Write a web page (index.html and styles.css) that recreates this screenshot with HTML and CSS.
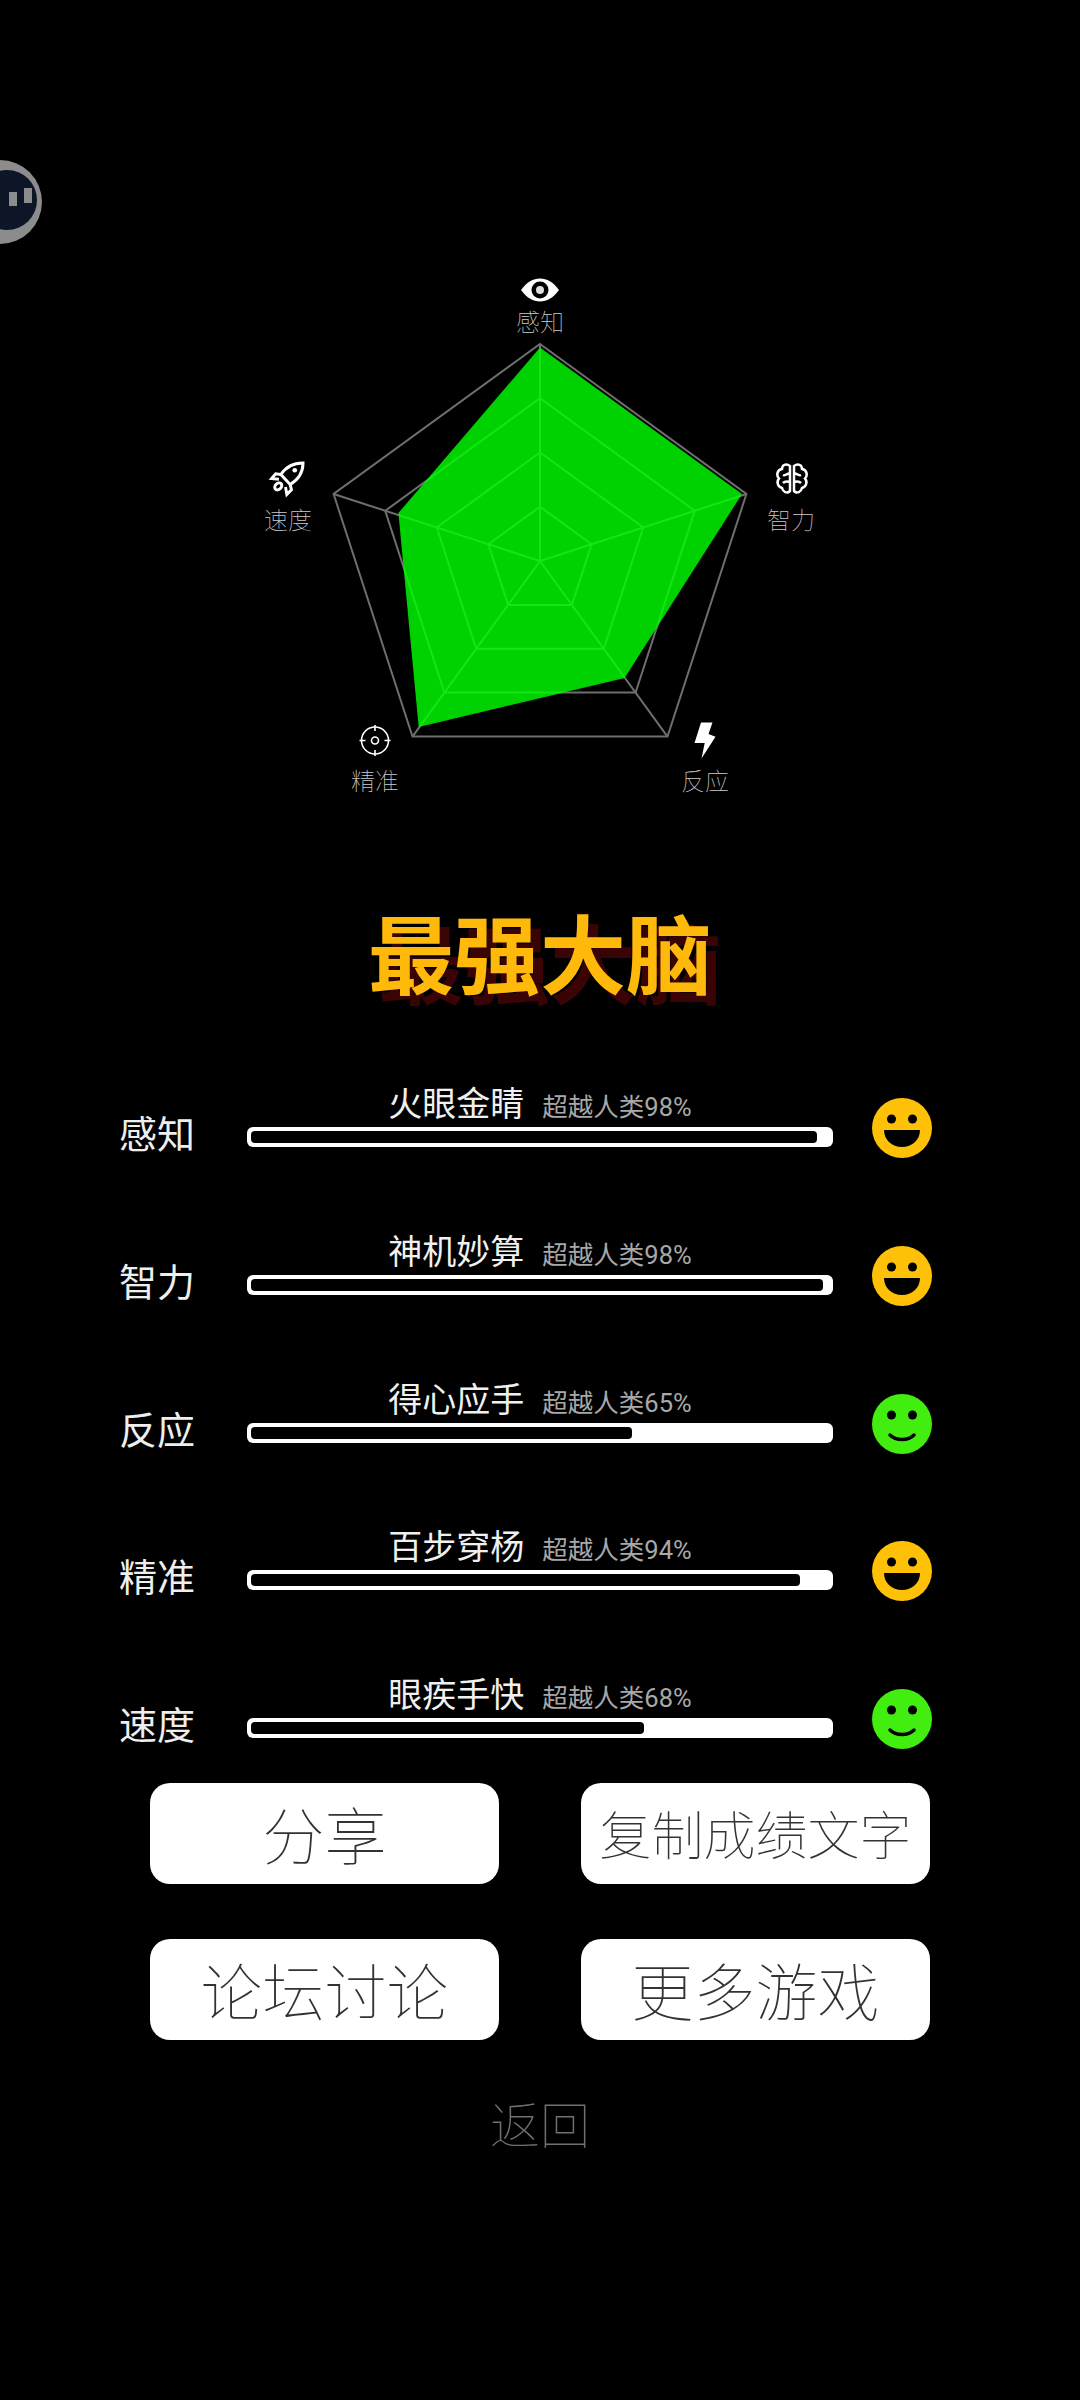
FILE: index.html
```html
<!DOCTYPE html>
<html lang="zh-CN">
<head>
    <meta charset="UTF-8">
    <meta name="viewport" content="width=device-width, initial-scale=1.0">
    <title>最强大脑</title>
    <link rel="stylesheet" href="styles.css">
</head>
<body>
    <div class="page">
        <!-- floating assistant ball, stuck to the left edge -->
        <svg class="float-ball" width="44" height="90" viewBox="0 0 44 90">
            <circle cx="0" cy="45" r="42" fill="#8c8c8c"/>
            <circle cx="7" cy="43" r="30" fill="#0c1626"/>
            <rect x="9" y="35" width="8" height="14" fill="#8c8c8c"/>
            <rect x="24" y="31" width="8" height="15" fill="#8c8c8c"/>
        </svg>

        <svg class="radar" width="1080" height="901" viewBox="0 0 1080 901">
            <g class="grid">
                <polygon points="540,344 746.4,494 667.5,736.6 412.5,736.6 333.6,494"/>
                <polygon points="540,398.3 694.8,510.8 635.6,692.6 444.4,692.6 385.2,510.8"/>
                <polygon points="540,452.5 643.2,527.5 603.8,648.8 476.2,648.8 436.8,527.5"/>
                <polygon points="540,506.8 591.6,544.2 571.9,604.9 508.1,604.9 488.4,544.2"/>
                <line x1="540" y1="561" x2="540" y2="344"/>
                <line x1="540" y1="561" x2="746.4" y2="494"/>
                <line x1="540" y1="561" x2="667.5" y2="736.6"/>
                <line x1="540" y1="561" x2="412.5" y2="736.6"/>
                <line x1="540" y1="561" x2="333.6" y2="494"/>
            </g>
            <polygon class="score" points="540,347.5 742,494 624.6,678 418.7,727 398.4,513"/>

            <!-- eye -->
            <path d="M521 290 C527 282 533 278.500 540 278.500 C547 278.500 553 282 559 290 C553 298 547 301.500 540 301.500 C533 301.500 527 298 521 290 Z" fill="#fff"/>
            <circle cx="540" cy="290" r="8.500" fill="#000"/>
            <circle cx="540" cy="290" r="4" fill="#ddd"/>
            <text class="axis-label" x="540" y="331">感知</text>

            <!-- brain -->
            <g class="icon-line" transform="translate(776 464)">
                <path id="lobe" d="M14 2 C10 -1 6 1 6 5 C1 6 0 11 3 14.500 C0 18 2 23 6 24 C7 28 11 30 14 27 Z M14 9 C11 10 9 12 7 11 M14 18 C11 17 9 17 7 19"/>
                <use href="#lobe" transform="translate(32 0) scale(-1 1)"/>
            </g>
            <text class="axis-label" x="791" y="529">智力</text>

            <!-- bolt -->
            <polygon points="701,722.500 712.500,722.500 708.500,734 715.500,736.700 701.500,758.500 704.700,743 694.500,743" fill="#fff"/>
            <text class="axis-label" x="705" y="790">反应</text>

            <!-- target -->
            <g class="icon-thin">
                <circle cx="375" cy="740.500" r="13.500"/>
                <circle cx="375" cy="740.500" r="3.500"/>
                <path d="M375 725 V731 M375 750 V756 M359.500 740.500 H365.500 M384.500 740.500 H390.500"/>
            </g>
            <text class="axis-label" x="375" y="790">精准</text>

            <!-- rocket -->
            <g class="icon-line" transform="translate(271 462) scale(0.33)">
                <path class="rocket" d="M97 3 C70 3 45 15 30 38 L58 68 C85 52 97 28 97 3 Z"/>
                <path class="rocket" d="M30 38 L14 36 L2 50 L24 52 M58 68 L62 84 L48 98 L44 76"/>
                <ellipse class="rocket" cx="22" cy="74" rx="9" ry="12" transform="rotate(45 22 74)"/>
                <circle cx="72" cy="25" r="7" fill="#fff"/>
            </g>
            <text class="axis-label" x="288" y="529">速度</text>
        </svg>

        <h1 class="title">最强大脑</h1>

        <div class="rows">
            <div class="row">
                <div class="row-name">感知</div>
                <div class="row-main">
                    <div class="caption"><span class="caption-main">火眼金睛</span><span class="caption-sub">超越人类98%</span></div>
                    <div class="bar"><div class="bar-fill" style="width: 98%"></div></div>
                </div>
                <svg class="face" width="60" height="60" viewBox="0 0 60 60">
                    <circle cx="30" cy="30" r="30" fill="#ffc107"/>
                    <circle cx="19.500" cy="21" r="4.500"/>
                    <circle cx="40.500" cy="21" r="4.500"/>
                    <path d="M12 32 H48 C48 42 40 49 30 49 C20 49 12 42 12 32 Z"/>
                </svg>
            </div>
            <div class="row">
                <div class="row-name">智力</div>
                <div class="row-main">
                    <div class="caption"><span class="caption-main">神机妙算</span><span class="caption-sub">超越人类98%</span></div>
                    <div class="bar"><div class="bar-fill" style="width: 99%"></div></div>
                </div>
                <svg class="face" width="60" height="60" viewBox="0 0 60 60">
                    <circle cx="30" cy="30" r="30" fill="#ffc107"/>
                    <circle cx="19.500" cy="21" r="4.500"/>
                    <circle cx="40.500" cy="21" r="4.500"/>
                    <path d="M12 32 H48 C48 42 40 49 30 49 C20 49 12 42 12 32 Z"/>
                </svg>
            </div>
            <div class="row">
                <div class="row-name">反应</div>
                <div class="row-main">
                    <div class="caption"><span class="caption-main">得心应手</span><span class="caption-sub">超越人类65%</span></div>
                    <div class="bar"><div class="bar-fill" style="width: 66%"></div></div>
                </div>
                <svg class="face" width="60" height="60" viewBox="0 0 60 60">
                    <circle cx="30" cy="30" r="30" fill="#42ee10"/>
                    <circle cx="19.500" cy="21" r="4.500"/>
                    <circle cx="40.500" cy="21" r="4.500"/>
                    <path class="smile" d="M18 41 C24 47 36 47 42 41"/>
                </svg>
            </div>
            <div class="row">
                <div class="row-name">精准</div>
                <div class="row-main">
                    <div class="caption"><span class="caption-main">百步穿杨</span><span class="caption-sub">超越人类94%</span></div>
                    <div class="bar"><div class="bar-fill" style="width: 95%"></div></div>
                </div>
                <svg class="face" width="60" height="60" viewBox="0 0 60 60">
                    <circle cx="30" cy="30" r="30" fill="#ffc107"/>
                    <circle cx="19.500" cy="21" r="4.500"/>
                    <circle cx="40.500" cy="21" r="4.500"/>
                    <path d="M12 32 H48 C48 42 40 49 30 49 C20 49 12 42 12 32 Z"/>
                </svg>
            </div>
            <div class="row">
                <div class="row-name">速度</div>
                <div class="row-main">
                    <div class="caption"><span class="caption-main">眼疾手快</span><span class="caption-sub">超越人类68%</span></div>
                    <div class="bar"><div class="bar-fill" style="width: 68%"></div></div>
                </div>
                <svg class="face" width="60" height="60" viewBox="0 0 60 60">
                    <circle cx="30" cy="30" r="30" fill="#42ee10"/>
                    <circle cx="19.500" cy="21" r="4.500"/>
                    <circle cx="40.500" cy="21" r="4.500"/>
                    <path class="smile" d="M18 41 C24 47 36 47 42 41"/>
                </svg>
            </div>
        </div>

        <div class="buttons">
            <button class="btn" type="button">分享</button>
            <button class="btn btn-small" type="button">复制成绩文字</button>
            <button class="btn" type="button">论坛讨论</button>
            <button class="btn" type="button">更多游戏</button>
        </div>

        <div class="back">返回</div>
    </div>
</body>
</html>
```

FILE: styles.css
```css
body {
    margin: 0;
    background-color: #000;
    font-family: "Noto Sans CJK SC", "Noto Sans", sans-serif;
}

.page {
    position: relative;
    width: 1080px;
    height: 2400px;
    overflow: hidden;
    background-color: #000;
}

.float-ball {
    position: absolute;
    left: 0;
    top: 157px;
}

.radar {
    display: block;
}

.grid polygon,
.grid line {
    fill: none;
    stroke: #6e6e6e;
    stroke-width: 2;
}

.score {
    fill: rgba(0, 255, 0, 0.82);
}

.axis-label {
    fill: #cccccc;
    font-size: 24px;
    font-weight: 100;
    text-anchor: middle;
}

.icon-line path,
.icon-line use {
    fill: none;
    stroke: #fff;
    stroke-width: 2.5;
}

.icon-line .rocket {
    fill: none;
    stroke: #fff;
    stroke-width: 9;
}

.icon-thin circle,
.icon-thin path {
    fill: none;
    stroke: #fff;
    stroke-width: 1.6;
}

.title {
    margin: 0;
    height: 100px;
    font-size: 86px;
    line-height: 100px;
    font-weight: 700;
    text-align: center;
    color: #ffb90a;
    text-shadow: 10px 10px 0 #3a0404;
}

.rows {
    display: flex;
    flex-direction: column;
    gap: 69.75px;
    margin-top: 79px;
    padding-left: 119px;
}

.row {
    display: flex;
    align-items: flex-start;
    height: 78px;
}

.row-name {
    width: 128px;
    margin-top: 30px;
    font-size: 38px;
    line-height: 44px;
    color: #eee;
}

.row-main {
    width: 586px;
}

.caption {
    display: flex;
    justify-content: center;
    align-items: baseline;
    gap: 18px;
    height: 44px;
    margin-bottom: 3px;
    line-height: 44px;
}

.caption-main {
    font-size: 34px;
    color: #f0f0f0;
}

.caption-sub {
    font-family: Roboto, "Noto Sans CJK SC", sans-serif;
    font-size: 25.5px;
    color: #a8a8a8;
}

.bar {
    box-sizing: border-box;
    height: 20px;
    padding: 4px;
    background-color: #fff;
    border-radius: 6px;
}

.bar-fill {
    height: 12px;
    background-color: #000;
    border-radius: 4px;
}

.face {
    display: block;
    margin-left: 39px;
    margin-top: 18px;
    fill: #000;
}

.smile {
    fill: none;
    stroke: #000;
    stroke-width: 3.5;
    stroke-linecap: round;
}

.buttons {
    display: grid;
    grid-template-columns: 349px 349px;
    column-gap: 82px;
    row-gap: 55px;
    margin-top: 34px;
    padding-left: 150px;
}

.btn {
    height: 101px;
    padding: 0 0 2px;
    border: none;
    border-radius: 20px;
    background-color: #fff;
    font-family: inherit;
    font-size: 62px;
    font-weight: 100;
    color: #333;
}

.btn-small {
    font-size: 52px;
}

.back {
    margin-top: 50px;
    font-size: 50px;
    line-height: 64px;
    font-weight: 100;
    text-align: center;
    color: #707070;
}
```
